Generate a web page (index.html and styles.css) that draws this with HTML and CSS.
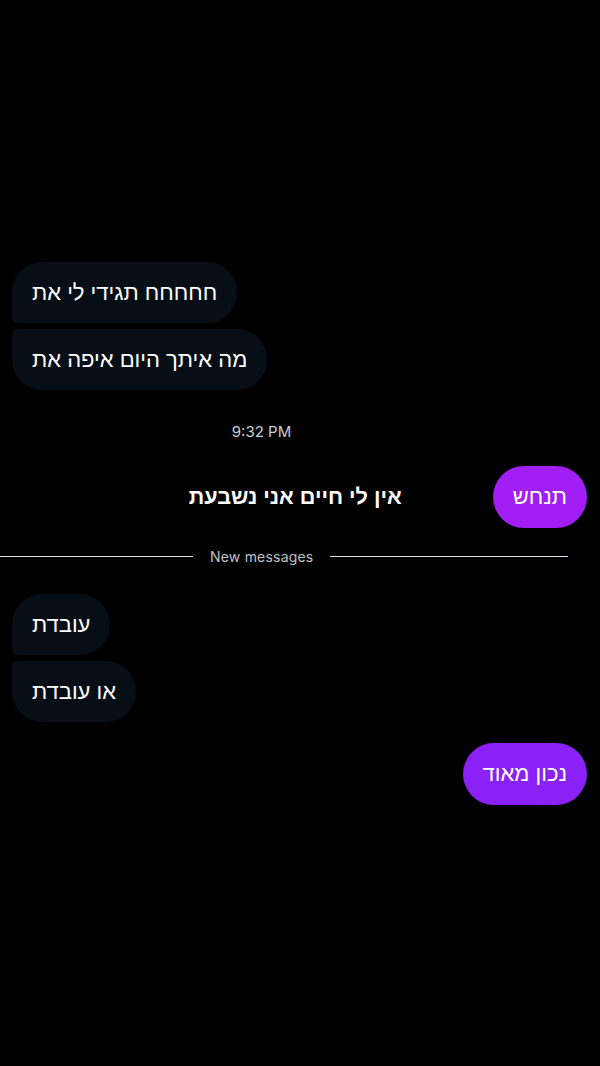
FILE: index.html
```html
<!DOCTYPE html>
<html lang="he">
<head>
  <meta charset="UTF-8">
  <title>צ'אט</title>
  <link rel="stylesheet" href="styles.css">
</head>
<body>
  <div class="chat">
    <div class="group">
      <div class="bubble in first" dir="rtl">חחחחח תגידי לי את</div>
      <div class="bubble in last" dir="rtl">מה איתך היום איפה את</div>
    </div>

    <div class="time">9:32 PM</div>

    <div class="row">
      <div class="note" dir="rtl">אין לי חיים אני נשבעת</div>
      <div class="bubble out magenta" dir="rtl">תנחש</div>
    </div>

    <div class="divider">
      <span class="line left"></span>
      <span class="label">New messages</span>
      <span class="line right"></span>
    </div>

    <div class="group">
      <div class="bubble in first" dir="rtl">עובדת</div>
      <div class="bubble in last" dir="rtl">או עובדת</div>
    </div>

    <div class="row">
      <div class="bubble out violet" dir="rtl">נכון מאוד</div>
    </div>
  </div>
</body>
</html>
```

FILE: styles.css
```css
html, body { margin: 0; background: #000; }
body { font-family: "Liberation Sans", "DejaVu Sans", sans-serif; color: #fff; }

.chat { display: flex; flex-direction: column; padding: 262px 13px 0 12px; }

.group { display: flex; flex-direction: column; align-items: flex-start; gap: 6px; }

.bubble { font-size: 22px; line-height: 61px; height: 61px; padding: 0 20px; box-sizing: border-box; white-space: nowrap; }
.bubble.in { background: #080e15; border-radius: 30px; }
.bubble.in.first { border-bottom-left-radius: 6px; }
.bubble.in.last { border-top-left-radius: 6px; }
.bubble.out { border-radius: 31px; height: 62px; line-height: 62px; }
.magenta { background: #a11ef4; }
.violet { background: #8a22f7; }

.time { width: 523px; margin-top: 32px; line-height: 20px; text-align: center; font-family: Inter, sans-serif; font-size: 15px; color: #c9ccd3; margin-left: -12px; }

.row { display: flex; justify-content: flex-end; align-items: center; gap: 91px; margin-top: 24px; }
.note { font-size: 21.6px; font-weight: bold; }

.divider { display: flex; align-items: center; gap: 17px; width: 568px; margin: 18px 0 0 -12px; height: 20px; }
.line { height: 1px; background: #d6dbe6; }
.line.left { width: 193px; }
.line.right { flex: 1; }
.label { font-family: Inter, sans-serif; font-size: 14px; color: #bfc3cb; letter-spacing: 0.2px; }

.divider + .group { margin-top: 28px; }
.group + .row:last-child { margin-top: 21px; }
```
